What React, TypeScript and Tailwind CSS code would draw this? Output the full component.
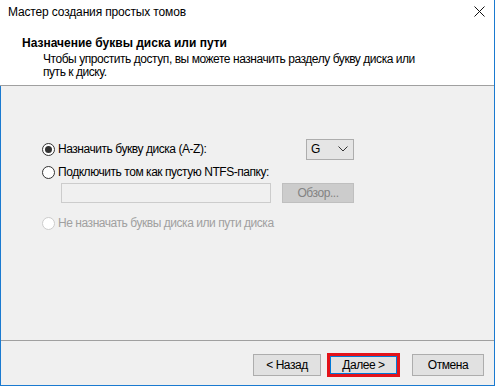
import React from "react";

const font = { fontFamily: '"Liberation Sans", Arial, sans-serif' };

function Radio({ checked, disabled }: { checked?: boolean; disabled?: boolean }) {
  return (
    <span
      className={`flex h-[13px] w-[13px] shrink-0 items-center justify-center rounded-full border bg-white ${
        disabled ? "border-[#cccccc]" : "border-[#333333]"
      }`}
    >
      {checked && <span className="h-[7px] w-[7px] rounded-full bg-[#333333]" />}
    </span>
  );
}

export default function App() {
  return (
    <div
      className="flex h-[386px] w-[495px] flex-col border-r border-b border-[#1a7ad0] text-[12px] text-black tracking-[-0.45px]"
      style={font}
    >
      {/* header */}
      <div className="flex h-[85px] flex-col bg-white">
        <div className="flex h-[24px] items-center justify-between pl-[8px] pr-[9px]">
          <span className="tracking-[-0.15px]">Мастер создания простых томов</span>
          <svg width="11" height="11" viewBox="0 0 11 11" className="mb-[1px]">
            <path d="M0.5 0.5 L10.5 10.5 M10.5 0.5 L0.5 10.5" stroke="#111" strokeWidth="1" />
          </svg>
        </div>
        <div className="mt-[12px] pl-[22px] font-bold leading-[15px] tracking-normal">Назначение буквы диска или пути</div>
        <div className="pl-[43px] leading-[13px] mt-[2px]">
          Чтобы упростить доступ, вы можете назначить разделу букву диска или
          <br />
          путь к диску.
        </div>
      </div>
      <div className="h-px bg-[#a0a0a0]" />
      {/* body */}
      <div className="flex flex-1 flex-col border-l border-[#1a7ad0] bg-[#f0f0f0]">
        <div className="flex flex-1 flex-col pl-[41px] pt-[52px]">
          <div className="flex h-[22px] items-center">
            <Radio checked />
            <span className="ml-[3px]">Назначить букву диска (A-Z):</span>
            <div className="ml-auto mr-[140px] flex h-[21px] w-[48px] items-center justify-between border border-[#adadad] bg-[#e5e5e5] pl-[4px] pr-[5px]">
              <span>G</span>
              <svg width="10" height="6" viewBox="0 0 10 6">
                <path d="M0.5 0.5 L5 5 L9.5 0.5" stroke="#333" fill="none" strokeWidth="1" />
              </svg>
            </div>
          </div>
          <div className="mt-[4px] flex h-[16px] items-center">
            <Radio />
            <span className="ml-[3px]">Подключить том как пустую NTFS-папку:</span>
          </div>
          <div className="mt-[3px] flex h-[20px]">
            <div className="ml-[19px] w-[210px] border border-[#cccccc] bg-[#f0f0f0]" />
            <div className="ml-[11px] flex w-[72px] items-center justify-center border border-[#bfbfbf] bg-[#cccccc] text-[#838383]">
              Обзор...
            </div>
          </div>
          <div className="mt-[12px] flex h-[16px] items-center">
            <Radio disabled />
            <span className="ml-[3px] text-[#a0a0a0]">Не назначать буквы диска или пути диска</span>
          </div>
        </div>
        <div className="h-px bg-[#a0a0a0]" />
        <div className="flex h-[44px] items-start justify-end pr-[10px] pt-[12px]">
          <div className="mt-[1px] flex h-[22px] w-[68px] items-center justify-center border border-[#adadad] bg-[#e1e1e1]">
            &lt; Назад
          </div>
          <div className="ml-[6px] border-[3px] border-[#e3131a] p-0">
            <div className="flex h-[18px] w-[67px] items-center justify-center border border-[#0078d7] bg-[#e1e1e1]">
              Далее &gt;
            </div>
          </div>
          <div className="ml-[12px] mt-[1px] flex h-[22px] w-[72px] items-center justify-center border border-[#adadad] bg-[#e1e1e1]">
            Отмена
          </div>
        </div>
      </div>
    </div>
  );
}
